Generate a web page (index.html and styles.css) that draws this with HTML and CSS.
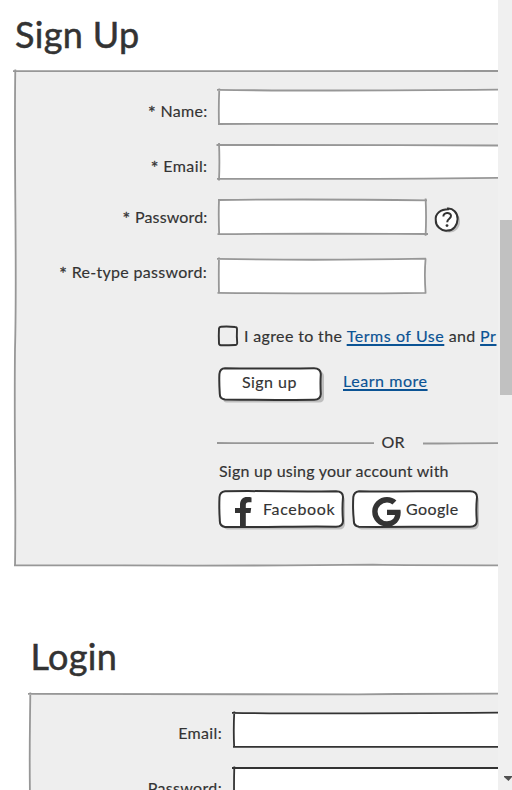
FILE: index.html
```
<!DOCTYPE html>
<html lang="en">
<head>
<meta charset="utf-8">
<title>Sign Up</title>
<link rel="stylesheet" href="styles.css">
</head>
<body>
<main class="page">
  <h1 class="title">Sign Up</h1>
  <section class="panel">
    <svg class="frame" width="640" height="500" viewBox="0 0 640 500"><path class="fill" d="M2 2.5H640V496H2z"/><path class="edge" d="M0 2.2C150 2.4 300 3 490 2L640 2.4M2.3 .5C.8 100 4.3 200 2 280C1 370 3.2 430 2 497M1 496.4C100 496 200 497.5 360 495.7C440 497 540 496 640 496"/></svg>
    <form class="form">
      <div class="row">
        <label class="label l-name"><span class="star">*</span>Name:</label>
        <span class="field wide"><svg class="frame" width="400" height="40" viewBox="0 0 400 40"><path class="fill paper" d="M3 3H400V37H3z"/><path class="edge" d="M1 2.8C80 4 190 3.5 284 2.7H400M3.3 1.5Q2.5 20 3 37.8M2 37C60 36.2 150 36.8 284 36.8H400"/></svg></span>
      </div>
      <div class="row">
        <label class="label l-email"><span class="star">*</span>Email:</label>
        <span class="field wide"><svg class="frame" width="400" height="40" viewBox="0 0 400 40"><path class="fill paper" d="M3 3H400V37H3z"/><path class="edge" d="M.5 3C80 3.2 190 2.8 284 3.5H400M3 1Q3.8 20 3 38.5M1 36.9C60 36.5 100 37.8 284 35.8H400"/></svg></span>
      </div>
      <div class="row">
        <label class="label l-password"><span class="star">*</span>Password:</label>
        <span class="field"><svg class="frame" width="214" height="41" viewBox="0 0 214 41"><path class="fill paper" d="M3 3H210V37H3z"/><path class="edge" d="M2 3C70 2.2 140 2.4 211 3.4M3 2.5Q2.4 20 3.2 37.7M1.5 37.2C70 36.4 140 36.8 212 37M209.6 1.5Q210.5 20 209.6 38.8"/></svg></span>
        <svg class="help" width="28" height="28" viewBox="0 0 28 28"><path class="shade" d="M15 4C22 4 26 9 26 15S22 26 15 26 5 21 5 15 8 5 15 4z"/><path class="ink-shape" d="M14 2.6C20 1.8 24.8 7 24.6 13S20.5 24.5 14.5 24.6C8 25.5 2.5 19.5 2.8 14.5C1.8 7.5 7.5 3 16 3.2"/><path class="mark" d="M10.4 10.5C10 6.2 17.8 5.6 18 9.8C18.1 13 14.2 12.5 14.2 16.3"/><circle class="dot" cx="14" cy="19.6" r="1.4"/></svg>
      </div>
      <div class="row last">
        <label class="label l-retype"><span class="star">*</span>Re-type password:</label>
        <span class="field"><svg class="frame" width="214" height="41" viewBox="0 0 214 41"><path class="fill paper" d="M3 3H210V37H3z"/><path class="edge" d="M1 2.8C60 4 140 4 210 2.6M3 1.5Q2.6 20 3 38M1.5 36.8C70 37.4 140 37.8 210 36.8M209.6 2.5Q208.2 18 209.6 37.5"/></svg></span>
      </div>
      <div class="agree">
        <svg class="check" width="22" height="22" viewBox="0 0 22 22"><path class="box" d="M4 1.8Q10 1.2 18 2Q20 2 20 4Q19.6 12 20.2 18Q20 20.3 18 20Q10 20.4 4 20.3Q2 20 2 18.5Q1.6 10 2 3.5Q2.2 2 4 1.8z"/></svg>
        <span class="agree-text">I agree to the <a class="link" href="#">Terms of Use</a> and <a class="link" href="#">Pr</a></span>
      </div>
      <div class="actions">
        <button class="btn btn-signup" type="button"><svg class="frame" width="108" height="38" viewBox="0 0 108 38"><path class="shade" d="M8 5H101Q106 5 106 10V31Q106 36 101 36H9Q5 36 5 32z"/><path class="ink-shape" d="M8 2.3C40 2.9 70 2.6 97 2.3Q103.5 2.3 103.8 8Q103.2 17 103.8 28Q103.5 33.8 97 33.7C65 34 40 34 8 33.5Q2.8 33 2.8 28Q2 16 2.4 8Q3 2.5 8 2.3z"/></svg><span class="btn-text">Sign up</span></button>
        <a class="link learn" href="#">Learn more</a>
      </div>
      <div class="divider">
        <svg class="rule-left" width="157" height="4" viewBox="0 0 157 4"><path class="line" d="M0 2C50 2.6 110 1.7 157 2.2"/></svg>
        <span class="or">OR</span>
        <svg class="rule-right" width="170" height="4" viewBox="0 0 170 4"><path class="line" d="M0 2.5C35 2.5 60 1.7 170 2"/></svg>
      </div>
      <p class="using">Sign up using your account with</p>
      <div class="social">
        <button class="btn btn-facebook" type="button"><svg class="frame" width="130" height="42" viewBox="0 0 130 42"><path class="shade" d="M8 5H121Q127 6 127 11V34Q127 40 121 40H9Q5 39 5 35z"/><path class="ink-shape" d="M8 2.3C40 1.6 85 2.9 119 2.3Q126 2.5 126 8Q125 20 126 32Q126 37.6 119 37.8C85 37 45 38.8 8 37.9Q2.5 37 2.8 31Q2 20 2.5 8Q3 2.8 8 2.3z"/></svg><svg class="icon-f" width="17" height="31" viewBox="0 0 17 31"><path class="solid" d="M5 30V16H0V11H5V8C5 2.5 8 0 12 0C14 0 15.5.2 16.5.4V5.2H13.5C11.5 5.2 10.8 6.4 10.8 8V11H16.2L15.5 16H10.8V30z"/></svg><span class="btn-text">Facebook</span></button>
        <button class="btn btn-google" type="button"><svg class="frame" width="130" height="42" viewBox="0 0 130 42"><path class="shade" d="M8 5H121Q127 6 127 11V34Q127 40 121 40H9Q5 39 5 35z"/><path class="ink-shape" d="M8 2.3C40 3 85 1.8 119 2.3Q126 2.5 126 8Q124.8 20 125.8 32Q126 37.5 119 37.8C85 37.2 45 38.2 8 37.8Q2.5 37 2.8 31Q1.6 20 2.3 8Q3 3 8 2.3z"/></svg><svg class="icon-g" width="29" height="30" viewBox="0 0 29 30"><path class="solid" d="M15 0C18.8 0 22 1.4 24.4 3.6L20.4 7.5C19 6.1 17.1 5.4 15 5.4A9.4 9.4 0 1 0 15 24.2C19.3 24.2 22.3 21.8 23 18H15V12.7H28.4C28.6 13.6 28.7 14.4 28.7 15.4C28.7 23.6 23.2 29.6 15 29.6A14.8 14.8 0 0 1 15 0z"/></svg><span class="btn-text">Google</span></button>
      </div>
    </form>
  </section>

  <h1 class="title title-login">Login</h1>
  <section class="panel panel-login">
    <svg class="frame" width="640" height="200" viewBox="0 0 640 200"><path class="fill" d="M2 3H640V200H2z"/><path class="edge" d="M0 2.8C120 2.2 220 3.8 330 3.3C420 2.6 500 2.2 640 2.2M2.3 1.5C2 40 1 70 2.3 120V200"/></svg>
    <form class="form">
      <div class="row">
        <label class="label l-login-email">Email:</label>
        <span class="field wide"><svg class="frame dark" width="400" height="40" viewBox="0 0 400 40"><path class="fill paper" d="M3 3H400V37H3z"/><path class="edge" d="M1 2.8C60 4 140 3.6 269 2.7H400M3.3 1.5Q2.3 20 3.2 37.8M2 36.8C60 36 150 37.3 269 36.8H400"/></svg></span>
      </div>
      <div class="row">
        <label class="label l-login-password">Password:</label>
        <span class="field wide"><svg class="frame dark" width="400" height="40" viewBox="0 0 400 40"><path class="fill paper" d="M3 3H400V37H3z"/><path class="edge" d="M1 3C60 2.6 150 3.7 269 3H400M3.3 1.5Q2.8 20 3.2 37.8"/></svg></span>
      </div>
    </form>
  </section>
</main>
<aside class="scrollbar">
  <div class="thumb"></div>
  <svg class="arrow" width="8" height="5" viewBox="0 0 8 5"><path d="M0 0H8V1L4.5 5L0 1z" fill="#505050"/></svg>
</aside>
</body>
</html>
```
FILE: styles.css
```
* { box-sizing: border-box; }
body {
  margin: 0;
  width: 512px;
  height: 790px;
  overflow: hidden;
  display: grid;
  grid-template-columns: 498px 14px;
  background: #fff;
  color: #333;
  font: 16px/20px Lato, "Liberation Sans", sans-serif;
  -webkit-text-stroke: 0.15px currentColor;
}
.page { height: 790px; overflow: hidden; }
.title {
  margin: 13px 0 0 15px;
  height: 57px;
  font-size: 36px;
  line-height: 42px;
  font-weight: 400;
  letter-spacing: 0.35px;
  -webkit-text-stroke: 0.5px #333;
  white-space: nowrap;
}
.panel { position: relative; width: 640px; height: 496px; margin-left: 15px; }
.frame { position: absolute; left: -2px; top: -2px; display: block; overflow: visible; }
.panel > .frame { top: -1px; }
.fill { fill: #eee; }
.paper { fill: #fff; }
.edge, .line { fill: none; stroke: #979797; stroke-width: 1.8; }
.dark .edge { stroke: #333; }
.shade { fill: #bebebe; transform: translate(1px, 0.5px); }
.ink-shape { fill: #fff; stroke: #333; stroke-width: 2; }
.solid, .dot { fill: #333; }
.mark { fill: none; stroke: #333; stroke-width: 2; }
.form { position: relative; padding-top: 19px; }
.row { display: flex; gap: 10px; height: 35px; margin-bottom: 20px; align-items: flex-start; }
.row:nth-child(3) { margin-bottom: 24px; }
.row.last { margin-bottom: 0; }
.label { width: 193px; padding-right: 0.5px; text-align: right; white-space: nowrap; }
.star { display: inline-block; width: 12.5px; font-size: 18px; line-height: 16px; text-align: left; letter-spacing: 0; vertical-align: -2px; -webkit-text-stroke: 0.3px #333; }
.field { position: relative; width: 208px; height: 35px; flex: none; }
.l-name { margin-top: 12px; letter-spacing: 0.3px; }
.l-email { margin-top: 12px; letter-spacing: 0.4px; }
.l-password { margin-top: 8px; letter-spacing: 0.15px; }
.l-retype { margin-top: 4px; padding-right: 1px; letter-spacing: 0.3px; }
.help { margin: 7px 0 0 -3px; overflow: visible; }
.agree { display: flex; margin: 32px 0 0 202px; height: 22px; white-space: nowrap; }
.check { flex: none; }
.agree-text { letter-spacing: 0.35px; margin: 1px 0 0 5px; }
.box { fill: #eee; stroke: #333; stroke-width: 1.9; }
.link { color: #0b5394; text-decoration: underline; text-underline-offset: 2px; text-decoration-thickness: 1.5px; letter-spacing: 0.55px; }
.actions { display: flex; margin: 21px 0 0 204px; height: 34px; align-items: flex-start; }
.btn { position: relative; display: flex; align-items: flex-start; padding: 0; border: 0; background: none; color: inherit; font: inherit; }
.btn-text { position: relative; white-space: nowrap; }
.btn-signup { width: 104px; height: 34px; padding: 4px 0 0 23px; letter-spacing: 0.45px; }
.learn { margin: 3px 0 0 20px; }
.divider { display: flex; margin: 30px 0 0 202px; height: 20px; align-items: center; }
.divider svg { flex: none; margin-top: 2px; }
.or { width: 49px; padding-left: 7.5px; letter-spacing: 0.3px; }
.using { margin: 9px 0 0 204px; letter-spacing: 0.24px; white-space: nowrap; }
.social { display: flex; gap: 8px; margin: 10px 0 0 204px; }
.btn-facebook, .btn-google { width: 126px; height: 38px; }
.btn-facebook { padding: 8px 0 0 44px; letter-spacing: 0.65px; }
.btn-google { padding: 8px 0 0 53px; letter-spacing: 0.4px; }
.icon-f, .icon-g { position: absolute; top: 5.5px; }
.icon-f { left: 16px; }
.icon-g { left: 19px; }
.title-login { margin: 69px 0 0 30.5px; height: 57px; }
.panel-login { margin-left: 30px; height: 97px; }
.panel-login .form { padding-top: 20px; }
.panel-login .label { margin-top: 11px; padding-right: 1px; letter-spacing: 0.35px; }
.scrollbar { height: 790px; background: #f0f0f0; overflow: hidden; }
.thumb { margin: 220px 0 0 2px; width: 12px; height: 175px; background: #c1c1c1; }
.arrow { display: block; margin: 381px 0 0 6px; }
```
